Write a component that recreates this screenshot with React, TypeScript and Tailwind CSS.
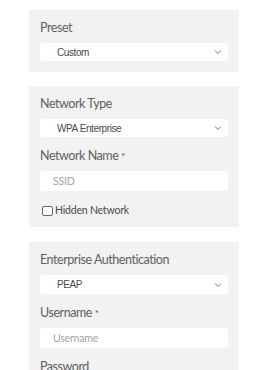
import { useState } from "react";

const Chevron = () => (
    <svg width="8" height="5" viewBox="0 0 8 5" className="pointer-events-none absolute right-[6px] top-1/2 -translate-y-1/2">
        <path d="M1 1 L4 4 L7 1" fill="none" stroke="#777" strokeWidth="1" />
    </svg>
);

const Campo = ({ label, children, first }: any) => (
    <div className={first ? "" : "mt-[11px]"}>
        <div className="mb-[7px] text-[12.5px] leading-[16px] tracking-[-0.45px] text-[#606060]">{label}</div>
        {children}
    </div>
);

const Selecao = ({ value, options, onChange, alto }: any) => (
    <div className="relative">
        <select
            value={value}
            onChange={(e) => onChange(e.target.value)}
            className={`block w-full appearance-none rounded-[3px] bg-white pl-[17px] pr-4 font-['Liberation_Sans',Arial,sans-serif] text-[10px] tracking-[-0.4px] text-[#4a4a4a] outline-none ${alto ? "h-[19px]" : "h-[18px]"}`}
        >
            {options.map((o: string) => (
                <option key={o} value={o}>{o}</option>
            ))}
        </select>
        <Chevron />
    </div>
);

const Entrada = ({ placeholder }: any) => (
    <input
        placeholder={placeholder}
        className="block h-[20px] w-full rounded-[3px] bg-white pl-[13px] text-[10.5px] tracking-[-0.2px] text-[#333] outline-none placeholder:text-[#a3a3a3]"
    />
);

const App = () => {
    const [preset, setPreset] = useState("Custom")
    const [tipo, setTipo] = useState("WPA Enterprise")
    const [auth, setAuth] = useState("PEAP")
    const [oculta, setOculta] = useState(false)

    return (
        <div className="min-h-[370px] bg-white pt-[10px] font-['Lato','Open_Sans',sans-serif]">
            <div className="ml-[29px] w-[210px]">
                <div className="bg-[#f1f2f1] px-[11px] pt-[10px] pb-[11px]">
                    <Campo label="Preset" first>
                        <Selecao value={preset} onChange={setPreset} options={["Custom", "Default"]} />
                    </Campo>
                </div>

                <div className="mt-[14px] bg-[#f1f2f1] px-[11px] pt-[10px] pb-[9px]">
                    <Campo label="Network Type" first>
                        <Selecao value={tipo} onChange={setTipo} options={["WPA Enterprise", "WPA Personal", "Open"]} />
                    </Campo>
                    <Campo label={<>Network Name <span className="text-[10px] align-top">*</span></>}>
                        <Entrada placeholder="SSID" />
                    </Campo>
                    <label className="mt-[13px] flex h-[14px] cursor-pointer items-center pl-[2px]">
                        <input type="checkbox" checked={oculta} onChange={() => setOculta(!oculta)} className="hidden" />
                        <span className="h-[10px] w-[11px] rounded-[2px] border border-[#666] bg-white"></span>
                        <span className="ml-[2px] text-[10.5px] tracking-[-0.2px] text-[#4a4a4a]">Hidden Network</span>
                    </label>
                </div>

                <div className="mt-[15px] bg-[#f1f2f1] px-[11px] pt-[10px] pb-[12px]">
                    <Campo label="Enterprise Authentication" first>
                        <Selecao value={auth} onChange={setAuth} options={["PEAP", "TTLS", "TLS"]} alto />
                    </Campo>
                    <Campo label={<>Username <span className="text-[10px] align-top">*</span></>}>
                        <Entrada placeholder="Username" />
                    </Campo>
                    <Campo label="Password">
                        <Entrada placeholder="Password" />
                    </Campo>
                </div>
            </div>
        </div>
    );
};

export default App;
